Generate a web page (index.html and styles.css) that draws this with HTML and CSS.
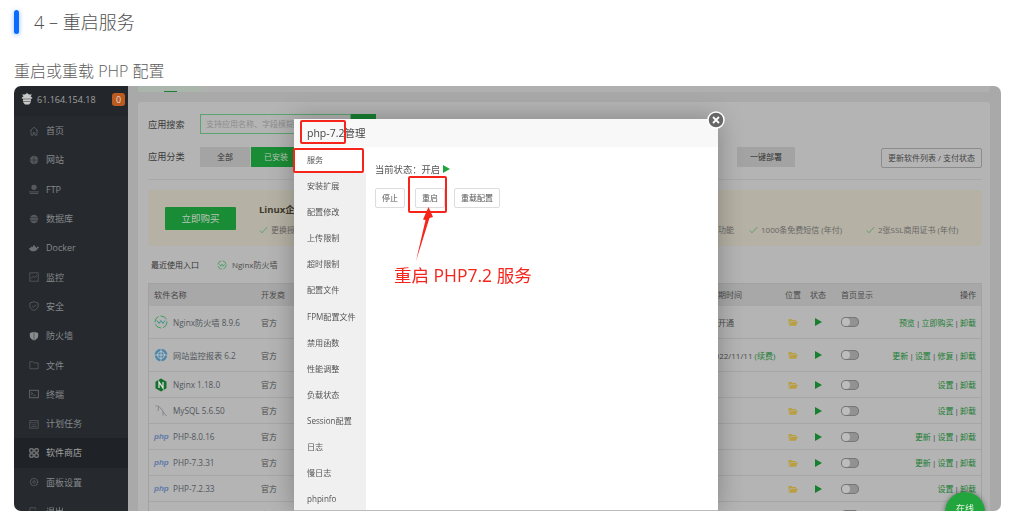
FILE: index.html
```html
<!DOCTYPE html>
<html lang="zh-CN">
<head>
<meta charset="utf-8">
<title>重启服务</title>
<link rel="stylesheet" href="styles.css">
</head>
<body>
<svg class="defs" aria-hidden="true">
  <symbol id="folder" viewBox="0 0 10 8"><path d="M.5 1H3.500L4.500 2H8V3H2.500L.5 7Z" fill="#b99f43"/><path d="M3 3.500H10L8 7.800H.8Z" fill="#b99f43"/></symbol>
  <symbol id="tick" viewBox="0 0 9 8"><path d="M.8 4.500 3 6.800 8.300 1" fill="none" stroke="#4a9c5f" stroke-width=".8"/></symbol>
</svg>
<h2 class="heading"><span class="heading-bar"></span>4 – 重启服务</h2>
<p class="intro">重启或重载 PHP 配置</p>
<div class="shot">
  <div class="shot-inner">
    <aside class="side">
      <div class="side-head">
        <svg class="logo" viewBox="0 0 12 12"><path d="M6 0 8 1.500 11 1.500 9.500 3.200 11.500 5 10 6 10 9 8 11.500 4 11.500 2 9 2 6 .5 5 2.500 3.200 1 1.500 4 1.500Z" fill="#c9c9c9"/><path d="M2 6H10M2 8.500H10" stroke="#555" stroke-width=".7"/></svg>
        <span class="ip">61.164.154.18</span>
        <span class="badge">0</span>
      </div>
      <nav class="nav">
        <a class="nav-item"><svg class="nav-ico" viewBox="0 0 12 12"><path d="M1 6 6 1.500 11 6M2.500 5V11H5V8H7V11H9.500V5" fill="none" stroke="#5c6064"/></svg>首页</a>
        <a class="nav-item"><svg class="nav-ico" viewBox="0 0 12 12"><circle cx="6" cy="6" r="5" fill="#55595d"/><path d="M1 6H11M6 1V11" stroke="#2a2e32" stroke-width=".8"/></svg>网站</a>
        <a class="nav-item"><svg class="nav-ico" viewBox="0 0 12 12"><circle cx="6" cy="4" r="3.200" fill="#55595d"/><path d="M0 9.500H12M1 11.500H11" stroke="#55595d" stroke-width="1.200"/></svg>FTP</a>
        <a class="nav-item"><svg class="nav-ico" viewBox="0 0 12 12"><ellipse cx="6" cy="6" rx="5" ry="5.200" fill="#55595d"/><path d="M1 4.400H11M1 7.600H11" stroke="#2a2e32" stroke-width=".8"/></svg>数据库</a>
        <a class="nav-item"><svg class="nav-ico" viewBox="0 0 12 12"><path d="M0 6.500H10.500C11.500 6.500 12 5.500 12 5 11 5 10.500 4.500 10.500 4 9.500 4.500 9.500 6 9 6H0C.5 9 2.500 10 5 10 8 10 9.500 8.500 10.500 6.500" fill="#6b6f73"/><path d="M2 4.500H8.500V6H2ZM5 2.800H7V4.500H5Z" fill="#6b6f73"/></svg>Docker</a>
        <a class="nav-item"><svg class="nav-ico" viewBox="0 0 12 12"><rect x="1" y="1" width="10" height="10" fill="none" stroke="#55595d"/><path d="M2.500 8 5 5 7 7 9.500 3.500" fill="none" stroke="#55595d"/></svg>监控</a>
        <a class="nav-item"><svg class="nav-ico" viewBox="0 0 12 12"><path d="M6 .8 11 2.500V6C11 8.500 8.500 10.500 6 11.300 3.500 10.500 1 8.500 1 6V2.500Z" fill="none" stroke="#5c6064"/><path d="M3.800 6 5.500 7.500 8.300 4.500" fill="none" stroke="#5c6064"/></svg>安全</a>
        <a class="nav-item"><svg class="nav-ico" viewBox="0 0 12 12"><path d="M6 .8 11 2.500V6C11 8.500 8.500 10.500 6 11.300 3.500 10.500 1 8.500 1 6V2.500Z" fill="#8a8d90"/><path d="M6 1V11" stroke="#2a2e32" stroke-width=".6"/></svg>防火墙</a>
        <a class="nav-item"><svg class="nav-ico" viewBox="0 0 12 12"><path d="M1 10.500V2H4.500L6 3.500H11V10.500Z" fill="none" stroke="#55595d"/></svg>文件</a>
        <a class="nav-item"><svg class="nav-ico" viewBox="0 0 12 12"><rect x=".8" y="1.500" width="10.400" height="9" fill="none" stroke="#6b6f73"/><path d="M2.500 4 4.500 5.500 2.500 7M5 7.500H8" fill="none" stroke="#6b6f73" stroke-width=".8"/></svg>终端</a>
        <a class="nav-item"><svg class="nav-ico" viewBox="0 0 12 12"><rect x="1" y="2" width="10" height="9" fill="none" stroke="#55595d"/><path d="M1 4.500H11M3 7H9M3 9H9" stroke="#55595d" stroke-width=".8"/></svg>计划任务</a>
        <a class="nav-item is-active"><svg class="nav-ico" viewBox="0 0 12 12"><path d="M1 1H5V5H1ZM7 1H11V5H7ZM1 7H5V11H1ZM7 7H11V11H7Z" fill="none" stroke="#a3a3a3"/></svg>软件商店</a>
        <a class="nav-item"><svg class="nav-ico" viewBox="0 0 12 12"><circle cx="6" cy="6" r="4.300" fill="none" stroke="#55595d" stroke-width="1.500" stroke-dasharray="1.700 .6"/><circle cx="6" cy="6" r="1.500" fill="none" stroke="#55595d"/></svg>面板设置</a>
        <a class="nav-item"><svg class="nav-ico" viewBox="0 0 12 12"><path d="M8 3V1H1V11H8V9M5 6H11.500" fill="none" stroke="#55595d"/></svg>退出</a>
      </nav>
    </aside>
    <main class="main">
      <div class="strip"><div class="strip-tab"><span class="strip-line"></span></div></div>
      <section class="panel">
        <div class="filter-row">
          <span class="filter-label">应用搜索</span>
          <span class="search-input">支持应用名称、字段模糊搜索</span>
          <span class="search-btn"></span>
        </div>
        <div class="filter-row cat-row">
          <span class="filter-label">应用分类</span>
          <span class="cat cat-light">全部</span>
          <span class="cat cat-green">已安装</span>
          <span class="cat-spacer"></span>
          <span class="cat cat-dark">一键部署</span>
          <span class="update-btn">更新软件列表 / 支付状态</span>
        </div>
        <div class="banner">
          <span class="buy">立即购买</span>
          <div class="banner-body">
            <strong class="banner-title">Linux企业版</strong>
            <div class="perks">
              <span class="perk perk-first"><svg class="tick"><use href="#tick"/></svg>更换授权IP</span>
              <span class="perk perk-a">功能</span>
              <span class="perk perk-b"><svg class="tick"><use href="#tick"/></svg>1000条免费短信 (年付)</span>
              <span class="perk"><svg class="tick"><use href="#tick"/></svg>2张SSL商用证书 (年付)</span>
            </div>
          </div>
        </div>
        <div class="recent">
          <span>最近使用入口</span>
          <svg class="recent-ico" viewBox="0 0 12 12"><circle cx="6" cy="6" r="5" fill="none" stroke="#3f9c5c" stroke-dasharray="6 2"/><path d="M3 5 4.500 7.500 6 5 7.500 7.500 9 5" fill="none" stroke="#3f9c5c" stroke-width=".9"/></svg>
          <span class="recent-name">Nginx防火墙</span>
        </div>
        <div class="table">
          <div class="row row-head"><span class="c-name">软件名称</span><span>开发商</span><span>到期时间</span><span class="c-mid">位置</span><span class="c-mid">状态</span><span class="c-home">首页显示</span><span class="c-ops">操作</span></div>
          <div class="row row-tall"><span class="c-name"><svg class="app-ico" viewBox="0 0 14 14"><circle cx="7" cy="7" r="6" fill="none" stroke="#3f9c5c" stroke-dasharray="7 2"/><path d="M3 5.500 5 8.500 7 5.500 9 8.500 11 5.500" fill="none" stroke="#3f8f8f"/></svg>Nginx防火墙 8.9.6</span><span>官方</span><span>未开通</span><span class="c-mid"><svg class="folder"><use href="#folder"/></svg></span><span class="c-mid"><i class="play"></i></span><span class="c-home"><i class="toggle"></i></span><span class="c-ops"><a>预览</a> | <a>立即购买</a> | <a>卸载</a></span></div>
          <div class="row row-tall"><span class="c-name"><svg class="app-ico" viewBox="0 0 14 14"><circle cx="7" cy="7" r="6.300" fill="#4f86a8"/><circle cx="7" cy="7" r="3.500" fill="none" stroke="#c9c9c9" stroke-width=".8"/><path d="M.5 7H13.500M7 .5V13.500" stroke="#c9c9c9" stroke-width=".8"/></svg>网站监控报表 6.2</span><span>官方</span><span>2022/11/11 <a class="renew">(续费)</a></span><span class="c-mid"><svg class="folder"><use href="#folder"/></svg></span><span class="c-mid"><i class="play"></i></span><span class="c-home"><i class="toggle"></i></span><span class="c-ops"><a>更新</a> | <a>设置</a> | <a>修复</a> | <a>卸载</a></span></div>
          <div class="row"><span class="c-name"><svg class="app-ico" viewBox="0 0 14 14"><path d="M7 .5 12.500 3.700V10.300L7 13.500 1.500 10.300V3.700Z" fill="#14702a"/><path d="M5 10V4L9 10V4" fill="none" stroke="#ddd" stroke-width="1.300"/></svg>Nginx 1.18.0</span><span>官方</span><span></span><span class="c-mid"><svg class="folder"><use href="#folder"/></svg></span><span class="c-mid"><i class="play"></i></span><span class="c-home"><i class="toggle"></i></span><span class="c-ops"><a>设置</a> | <a>卸载</a></span></div>
          <div class="row"><span class="c-name"><svg class="app-ico" viewBox="0 0 14 14"><path d="M1.500 2C5 1.500 7 4 9 7.500 10 9 11 10 12.500 12M4.500 3 4 7M9 7.500 9 11.500" fill="none" stroke="#7a8087" stroke-width=".9"/></svg>MySQL 5.6.50</span><span>官方</span><span></span><span class="c-mid"><svg class="folder"><use href="#folder"/></svg></span><span class="c-mid"><i class="play"></i></span><span class="c-home"><i class="toggle"></i></span><span class="c-ops"><a>设置</a> | <a>卸载</a></span></div>
          <div class="row"><span class="c-name"><em class="php">php</em>PHP-8.0.16</span><span>官方</span><span></span><span class="c-mid"><svg class="folder"><use href="#folder"/></svg></span><span class="c-mid"><i class="play"></i></span><span class="c-home"><i class="toggle"></i></span><span class="c-ops"><a>更新</a> | <a>设置</a> | <a>卸载</a></span></div>
          <div class="row"><span class="c-name"><em class="php">php</em>PHP-7.3.31</span><span>官方</span><span></span><span class="c-mid"><svg class="folder"><use href="#folder"/></svg></span><span class="c-mid"><i class="play"></i></span><span class="c-home"><i class="toggle"></i></span><span class="c-ops"><a>更新</a> | <a>设置</a> | <a>卸载</a></span></div>
          <div class="row"><span class="c-name"><em class="php">php</em>PHP-7.2.33</span><span>官方</span><span></span><span class="c-mid"><svg class="folder"><use href="#folder"/></svg></span><span class="c-mid"><i class="play"></i></span><span class="c-home"><i class="toggle"></i></span><span class="c-ops"><a>设置</a> | <a>卸载</a></span></div>
          <div class="row"><span class="c-name"><em class="php">php</em>PHP-7.1.33</span><span>官方</span><span></span><span class="c-mid"><svg class="folder"><use href="#folder"/></svg></span><span class="c-mid"><i class="play"></i></span><span class="c-home"><i class="toggle"></i></span><span class="c-ops"></span></div>
        </div>
      </section>
    </main>
    <div class="online">在线</div>
    <div class="modal">
      <div class="modal-title">php-7.2管理</div>
      <div class="modal-body">
        <ul class="modal-menu">
          <li class="is-current">服务</li>
          <li>安装扩展</li>
          <li>配置修改</li>
          <li>上传限制</li>
          <li>超时限制</li>
          <li>配置文件</li>
          <li>FPM配置文件</li>
          <li>禁用函数</li>
          <li>性能调整</li>
          <li>负载状态</li>
          <li>Session配置</li>
          <li>日志</li>
          <li>慢日志</li>
          <li>phpinfo</li>
        </ul>
        <div class="modal-main">
          <div class="status">当前状态：开启<i class="status-play"></i></div>
          <div class="actions">
            <span class="action">停止</span>
            <span class="action action-restart">重启</span>
            <span class="action">重载配置</span>
          </div>
        </div>
      </div>
    </div>
    <span class="close"><svg viewBox="0 0 18 18"><circle cx="9" cy="9" r="8" fill="#666" stroke="#fff" stroke-width="1.500"/><path d="M6 6 12 12M12 6 6 12" stroke="#fff" stroke-width="1.800"/></svg></span>
    <span class="mark mark-title"></span>
    <span class="mark mark-menu"></span>
    <span class="mark mark-btn"></span>
    <svg class="arrow" viewBox="0 0 30 60"><polygon points="1,57 10.500,16 8,15.500 13.500,3 18,13 14.500,14" fill="#f5251c"/></svg>
    <span class="note">重启 PHP7.2 服务</span>
  </div>
</div>
</body>
</html>
```
FILE: styles.css
```css
* { box-sizing: border-box; }
html, body { margin: 0; padding: 0; background: #fff; }
body {
  width: 1013px;
  height: 521px;
  overflow: hidden;
  padding: 10px 12px 0 14px;
  font-family: "Open Sans", "Noto Sans CJK SC", sans-serif;
}
.defs { display: none; }
.heading {
  display: flex;
  align-items: center;
  gap: 15px;
  height: 24px;
  margin: 0;
  font-size: 18px;
  font-weight: 300;
  line-height: 22px;
  color: #505050;
}
.heading-bar {
  width: 5px;
  height: 24px;
  border-radius: 3px;
  background: #0a6cff;
  box-shadow: 0 1px 5px rgba(10, 108, 255, .45);
}
.intro {
  margin: 25px 0 0;
  height: 27px;
  line-height: 24px;
  font-size: 16px;
  font-weight: 300;
  color: #5c5c5c;
}
.shot {
  width: 987px;
  height: 425px;
  border-radius: 7px;
  overflow: hidden;
}
.shot-inner {
  position: relative;
  display: flex;
  width: 100%;
  height: 100%;
  background: #a9a9a9;
  filter: blur(.4px);
}
.side {
  flex: 0 0 114px;
  background: #262a2e;
  color: #85888b;
  font-size: 9.500px;
}
.side-head {
  display: flex;
  align-items: center;
  height: 30px;
  padding: 0 3px 4px 7px;
  background: #23272b;
}
.logo { width: 12px; height: 12px; margin-right: 4px; }
.ip { flex: 1; color: #a0a0a0; font-size: 9px; }
.badge {
  width: 13px;
  height: 13px;
  border-radius: 3px;
  background: #bd5a20;
  color: #ddd;
  font-size: 9px;
  line-height: 13px;
  text-align: center;
}
.nav-item {
  display: flex;
  align-items: center;
  height: 29.300px;
  padding-left: 15px;
  font-size: 9px;
}
.nav-item.is-active { background: #1f2226; color: #a5a5a5; }
.nav-ico { width: 10px; height: 10px; margin-right: 7px; flex: none; }
.main {
  flex: 1;
  padding: 0 11px 0 10px;
  font-size: 8px;
  color: #3b3b3b;
  overflow: hidden;
}
.strip {
  height: 6px;
  margin-bottom: 10px;
  background: #b0b0b0;
  border-radius: 0 0 3px 3px;
}
.strip-tab {
  width: 65px;
  height: 6px;
  padding-left: 26px;
  background: #aab5ac;
}
.strip-line {
  display: block;
  width: 13px;
  height: 6px;
  border-bottom: 1px solid #1b7f36;
}
.panel {
  padding: 12px 8px 0 10px;
  height: 420px;
  background: #b4b4b4;
  border-radius: 3px 3px 0 0;
}
.filter-row { display: flex; align-items: center; height: 20px; }
.filter-label { width: 52px; font-size: 9.200px; color: #3a3a3a; }
.search-input {
  width: 151px;
  height: 20px;
  padding-left: 5px;
  border: 1px solid #5aa56f;
  color: #8c8c8c;
  font-size: 8px;
  line-height: 18px;
  overflow: hidden;
  white-space: nowrap;
}
.search-btn { width: 25px; height: 20px; background: #167f30; }
.cat-row { margin-top: 13px; padding-bottom: 13px; height: 33px; border-bottom: 1px solid #a9a9a9; align-items: flex-start; }
.cat-row .filter-label { line-height: 20px; }
.cat { display: block; height: 20px; line-height: 20px; text-align: center; font-size: 8px; }
.cat-light { width: 50px; background: #a4a4a4; color: #333; margin-right: 1px; }
.cat-green { width: 50px; background: #1a8c36; color: #b8c4b8; }
.cat-spacer { flex: 1; }
.cat-dark { width: 58px; margin-right: 86px; background: #a3a3a3; color: #333; }
.update-btn {
  width: 101px;
  height: 20px;
  margin-top: 1px;
  border: 1px solid #8c8c8c;
  border-radius: 2px;
  color: #444;
  font-size: 8px;
  line-height: 18px;
  text-align: center;
  white-space: nowrap;
}
.banner {
  display: flex;
  align-items: center;
  height: 56px;
  margin-top: 10px;
  padding-left: 17px;
  border-radius: 2px;
  background: #b5b1a4;
}
.buy {
  width: 71px;
  height: 23px;
  border-radius: 1px;
  background: #1a8c36;
  color: #b8c4b8;
  font-size: 9.500px;
  line-height: 23px;
  text-align: center;
}
.banner-body { margin-left: 23px; flex: 1; }
.banner-title { display: block; height: 22px; font-size: 9.500px; color: #3e3a2c; }
.perks { display: flex; font-size: 8px; color: #666; white-space: nowrap; }
.perk-first { width: 459px; }
.perk-a { width: 31px; }
.perk-b { width: 117px; }
.tick { width: 9px; height: 8px; margin-right: 3px; vertical-align: -1px; }
.recent { display: flex; align-items: center; height: 37px; padding-left: 3px; font-size: 8px; color: #333; }
.recent-ico { width: 10px; height: 10px; margin: 0 5px 0 18px; }
.recent-name { color: #4d4d4d; }
.table { border: 1px solid #a2a2a2; border-bottom: 0; }
.row {
  display: grid;
  grid-template-columns: 112px 449px 72px 22px 28px 48px 1fr;
  align-items: center;
  height: 26px;
  border-bottom: 1px solid #a6a6a6;
  color: #4b4b4b;
  font-size: 8px;
  white-space: nowrap;
}
.row-head { height: 22px; padding-bottom: 2px; background: #a8a8a8; border-bottom: 0; }
.row-tall { height: 33px; }
.c-name { display: flex; align-items: center; padding-left: 5px; color: #51565c; }
.row-head .c-name { color: #444; }
.row > .c-name { font-size: 8.200px; }
.c-mid { display: flex; justify-content: center; }
.c-home { padding-left: 9px; display: block; }
.c-ops { padding-right: 5px; text-align: right; color: #444; word-spacing: -1px; }
.c-ops a, .renew { color: #1a7d33; }
.app-ico { width: 14px; height: 14px; margin-right: 5px; flex: none; }
.php {
  width: 14px;
  margin-right: 5px;
  flex: none;
  font-family: "Liberation Sans", sans-serif;
  font-size: 8px;
  font-style: italic;
  font-weight: 700;
  color: #5f7aa8;
}
.folder { display: block; width: 10px; height: 8px; }
.play {
  display: block;
  width: 0;
  height: 0;
  border-left: 7px solid #177f30;
  border-top: 4.500px solid transparent;
  border-bottom: 4.500px solid transparent;
}
.toggle {
  position: relative;
  display: block;
  width: 18px;
  height: 10px;
  border-radius: 5px;
  background: #929292;
  box-shadow: inset 0 0 0 1px #777;
}
.toggle::before {
  content: "";
  position: absolute;
  left: 1px;
  top: 1px;
  width: 8px;
  height: 8px;
  border-radius: 50%;
  background: #bdbdbd;
}
.online {
  position: absolute;
  right: 16px;
  top: 406px;
  width: 40px;
  height: 40px;
  border-radius: 50%;
  background: #21a53c;
  box-shadow: 0 0 5px rgba(0, 0, 0, .4);
  color: #e8f5e8;
  font-size: 9px;
  line-height: 33px;
  text-align: center;
}
.modal {
  position: absolute;
  left: 280px;
  top: 33px;
  width: 424px;
  height: 392px;
  background: #fff;
  border-bottom: 1px solid #bbb;
  box-shadow: 0 0 24px rgba(0, 0, 0, .28);
  color: #555;
}
.modal-title {
  height: 28px;
  padding-left: 13px;
  background: #f8f8f8;
  font-size: 10.500px;
  line-height: 28px;
  color: #444;
}
.modal-body { display: flex; height: 363px; }
.modal-menu {
  width: 72px;
  margin: 0;
  padding: 0;
  list-style: none;
  background: #f0f0f0;
  font-size: 8.100px;
}
.modal-menu li {
  height: 26.100px;
  padding-left: 13px;
  line-height: 26.100px;
  white-space: nowrap;
}
.modal-menu .is-current { background: #fff; }
.modal-main { padding: 11px 9px; }
.status { height: 21px; display: flex; align-items: center; font-size: 9.300px; color: #555; }
.status-play {
  width: 0;
  height: 0;
  margin-left: 3px;
  border-left: 7px solid #20a53a;
  border-top: 4.500px solid transparent;
  border-bottom: 4.500px solid transparent;
}
.actions { display: flex; margin-top: 9px; }
.action {
  height: 20px;
  padding: 0 6px;
  margin-right: 10px;
  border: 1px solid #ddd;
  border-radius: 2px;
  font-size: 8px;
  line-height: 18px;
  color: #555;
}
.action-restart { margin-right: 9px; }
.close { position: absolute; left: 693px; top: 25px; width: 18px; height: 18px; }
.close svg { display: block; width: 18px; height: 18px; }
.mark {
  position: absolute;
  border: 2px solid #f5251c;
  border-radius: 2px;
}
.mark-title { left: 286px; top: 34px; width: 46px; height: 24px; }
.mark-menu { left: 279px; top: 62px; width: 71px; height: 25px; }
.mark-btn { left: 394px; top: 90px; width: 39px; height: 37px; }
.arrow { position: absolute; left: 401px; top: 118px; width: 30px; height: 60px; }
.note {
  position: absolute;
  left: 380px;
  top: 176px;
  font-size: 17.500px;
  line-height: 26px;
  color: #f5251c;
  white-space: nowrap;
}
```
